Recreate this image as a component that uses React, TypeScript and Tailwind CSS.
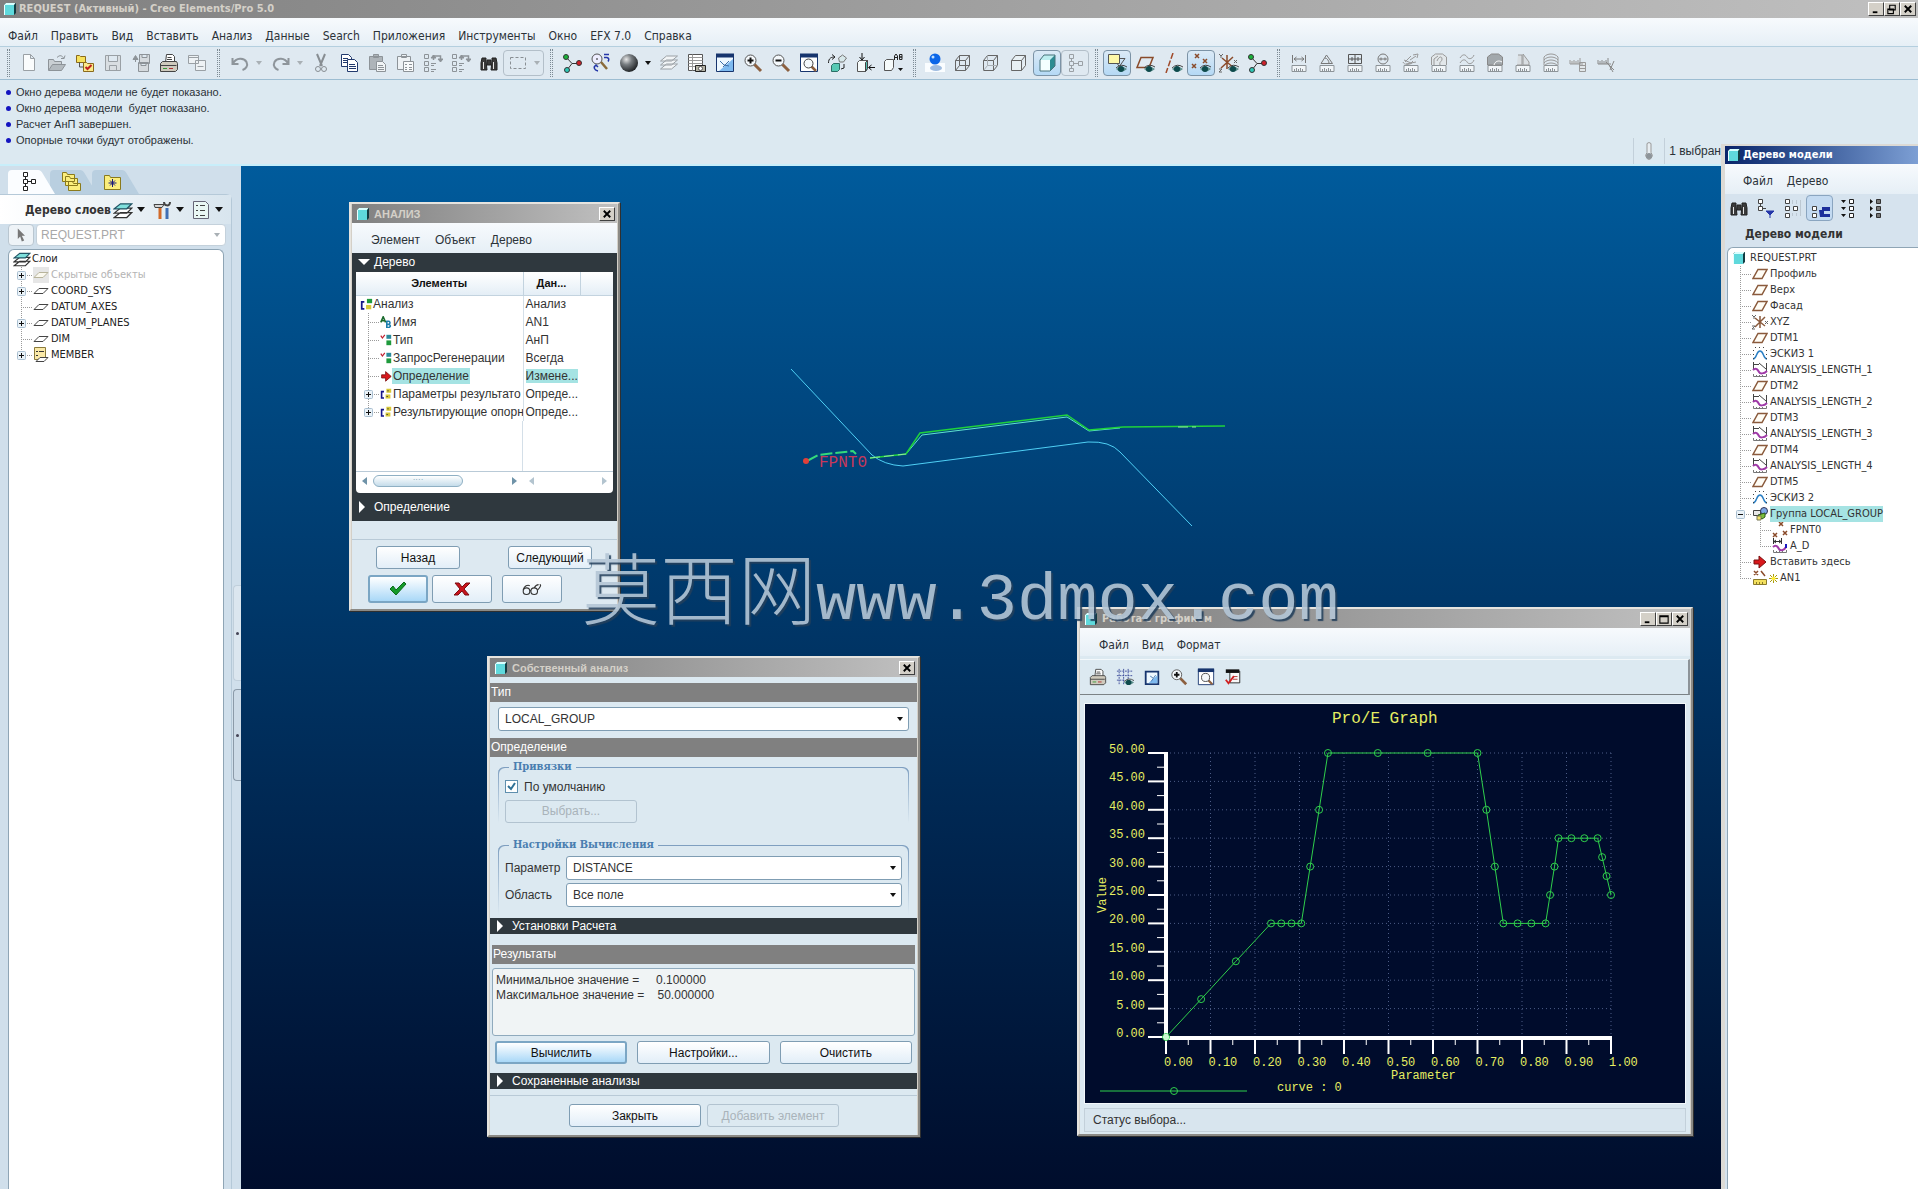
import { useState } from 'react'
import type { ReactNode } from 'react'
import clsx from 'clsx'

// ---------- icons ----------

type IconProps = { children: ReactNode; size?: number; box?: number }

function Ico({ children, size = 20, box = 20 }: IconProps) {
  return (
    <svg width={size} height={size} viewBox={`0 0 ${box} ${box}`} fill="none" stroke="#444" strokeWidth="1" className="shrink-0" aria-hidden="true">
      {children}
    </svg>
  )
}

const Eye = () => (
  <g stroke="none">
    <path d="M9 16 Q14 11 20 16 Q14 21 9 16Z" fill="#5c8f8c" />
    <circle cx="14" cy="16" r="3" fill="#0e4a4c" />
    <path d="M9 15 Q14 10 20 14" stroke="#444" fill="none" />
  </g>
)

const Ruler = () => (
  <path d="M3 12.500h14v6h-14z M5.500 16v2.500 M7.500 15v3.500 M9.500 16v2.500 M11.500 15v3.500 M13.500 16v2.500" stroke="#8d9499" fill="#f1f5f8" />
)

const Cube = ({ size = 14 }: { size?: number }) => (
  <svg width={size} height={size} viewBox="0 0 14 14" className="shrink-0" aria-hidden="true">
    <path d="M1 3 L3 1 H13 V11 L11 13 H1Z" fill="#123c42" />
    <path d="M1 3 L3 1 H12.500 L11 3Z" fill="#d8ffff" />
    <rect x="1" y="3" width="10" height="10" fill="#5fd9dc" />
    <path d="M1.500 3V13" stroke="#e8ffff" />
  </svg>
)

const WIRE = 'M2.500 7.500h10v10h-10z M2.500 7.500l4-5h10l-4 5 M16.500 2.500v10l-4 5'
const BINOCULARS = (
  <g stroke="#222" fill="#3a3a3a">
    <path d="M3 5h4v3l1 9h-6v-7z M13 5h4l1 5v7h-6l1-9z" />
    <path d="M8 7h4v5h-4z" />
    <path d="M4.500 9v7 M14.500 9v7" stroke="#e5e5e5" />
  </g>
)

const ICONS: Record<string, ReactNode> = {
  newFile: <path d="M4.500 1.500h7l4 4v12h-11z M11.500 1.500v4h4" stroke="#9aa0a5" fill="#fafcfd" />,
  open: (
    <g stroke="#8d9398" fill="#c9cfd3">
      <path d="M1.500 17V6.500h5l1 2h7v3" />
      <path d="M1.500 17.500l4-6h13l-4 6z" fill="#b3babf" />
      <path d="M10 4.500c3-3 5-2 7 1l1-3 M17 5.500h-3" fill="none" />
    </g>
  ),
  folders: (
    <g stroke="#8a6a1c" fill="#f7e15c">
      <path d="M1.500 2.500h3l1 1h5v6h-9z" />
      <path d="M4.500 9v5h4" fill="none" stroke="#555" />
      <path d="M8.500 9.500h3l1 1h6v8h-10z" fill="#fbe98a" />
      <path d="M10.500 14l2 2 4-4" stroke="#c02020" strokeWidth="2" fill="none" />
    </g>
  ),
  save: <path d="M2.500 2.500h15v15h-15z M5.500 2.500v6h9v-6 M6.500 17.500v-5h7v5" stroke="#9aa0a5" fill="#d9dee2" />,
  saveCopy: (
    <g stroke="#8d9398" fill="#d5dade">
      <path d="M8.500 1.500h10v9h-10z M7.500 9.500h10v9h-10z M10 9.500v3h5v-3 M11 1.500v3h5v-3" />
      <path d="M4.500 9V4.500 M2 6.500l2.500-4 2.500 4z" fill="#8d9398" />
    </g>
  ),
  printer: (
    <g stroke="#444">
      <path d="M6.500 9.500l1-8h6l2 2v6" fill="#fff" />
      <path d="M8.500 4.500h4 M8 6.500h5" />
      <path d="M1.500 10.500l2-2h14l1 2v6l-2 2h-15z" fill="#cfcabd" />
      <path d="M1.500 12.500h16" />
      <path d="M4 15.500h4" stroke="#3a9a3a" />
      <path d="M10 15.500h4" stroke="#b03030" />
    </g>
  ),
  windows: <path d="M1.500 2.500h10v8h-10z M1.500 4.500h10 M8.500 7.500h10v10h-10z M10.500 13.500h6" stroke="#9aa0a5" fill="#eef2f5" />,
  undo: <path d="M2.500 5v6h6 M3 10.500c3-6 11-6 13.500-1.500 2 4-1 7-4 8" stroke="#8e959b" strokeWidth="2" />,
  redo: <path d="M17.500 5v6h-6 M17 10.500c-3-6-11-6-13.500-1.500-2 4 1 7 4 8" stroke="#8e959b" strokeWidth="2" />,
  cut: (
    <g stroke="#888e93" fill="none">
      <path d="M6 1l5 12 M14 1l-5 12" strokeWidth="2" />
      <circle cx="7" cy="16" r="2.500" />
      <circle cx="13" cy="16" r="2.500" />
    </g>
  ),
  copy: (
    <g stroke="#223a6e" fill="#fff">
      <path d="M2.500 1.500h7l3 3v9h-10z" />
      <path d="M4 5.500h5 M4 7.500h6 M4 9.500h6" />
      <path d="M8.500 6.500h7l3 3v9h-10z" />
      <path d="M10 11.500h6 M10 13.500h7 M10 15.500h7" />
    </g>
  ),
  paste: (
    <g stroke="#8d9398" fill="#aeb4b9">
      <path d="M2.500 3.500h13v13h-13z M6.500 1.500h5v3h-5z" />
      <path d="M9.500 8.500h6l3 3v7h-9z" fill="#f1f4f6" />
      <path d="M11 12.500h5 M11 14.500h6 M11 16.500h6" />
    </g>
  ),
  pasteSpecial: (
    <g stroke="#8d9398" fill="#eef2f5">
      <path d="M2.500 3.500h13v13h-13z M6.500 1.500h5v3h-5z" />
      <path d="M8.500 8.500h10v10h-10z" fill="#f8fafb" />
      <path d="M10 11.500h2 M14 11.500h3 M10 14.500h2 M14 14.500h3 M10 16.500h2 M14 16.500h3" />
    </g>
  ),
  regen: (
    <g stroke="#8d9398" fill="none">
      <path d="M1.500 1.500h4v4h-4z M1.500 8.500h4v4h-4z M1.500 14.500h4v4h-4z M8 10.500h5 M8 16.500h5 M8 12.500h3 M8 18.500h3" />
      <path d="M10.500 7v-4h7v5" strokeWidth="1.500" />
      <path d="M8 5l2.500-3 2.500 3z M15 6h5l-2.500 3z" fill="#8d9398" />
    </g>
  ),
  find: BINOCULARS,
  selectBox: <path d="M2.500 4.500h15v11h-15z" stroke="#888e93" strokeDasharray="3 2" />,
  csys: (
    <g stroke="#333">
      <path d="M10 10.500h7 M10 10.500L4 4 M10 10.500L5 17" />
      <circle cx="4" cy="4" r="2.500" fill="#19b23a" />
      <circle cx="17" cy="10" r="2.500" fill="#d0202a" />
      <circle cx="5" cy="17" r="2.500" fill="#2fc7b5" />
    </g>
  ),
  spin: (
    <g>
      <circle cx="7" cy="6" r="5" stroke="#555" fill="#eef" />
      <path d="M6.500 6h1" stroke="#222" strokeWidth="2" />
      <path d="M11 9l6 7" stroke="#8a6a3a" strokeWidth="2.500" />
      <path d="M14 1.500h5 M14 4.500h3q3 1 1 4 M6 12c-3 2-2 5 2 6 M4 14l2-2 2 2" stroke="#2436a8" strokeWidth="1.500" />
    </g>
  ),
  sphere: (
    <>
      <defs>
        <radialGradient id="ball" cx="35%" cy="30%" r="75%">
          <stop offset="0" stopColor="#e8e8e8" />
          <stop offset="0.4" stopColor="#777c80" />
          <stop offset="1" stopColor="#1a1d20" />
        </radialGradient>
      </defs>
      <circle cx="10" cy="10" r="9" fill="url(#ball)" stroke="none" />
    </>
  ),
  layersGray: <path d="M1.500 16l6-5h11l-6 5z M1.500 12l6-5h11l-6 5z M1.500 8l6-5h11l-6 5z" stroke="#9aa0a5" fill="#f2f5f7" />,
  viewMgr: (
    <g stroke="#555" fill="#fff">
      <path d="M1.500 1.500h14v16h-14z" />
      <path d="M1.500 4.500h14 M1.500 7.500h14 M1.500 10.500h14 M1.500 13.500h14 M5.500 1.500v16" stroke="#999" />
      <path d="M8.500 12.500h10v6h-10z" fill="#b5b3a5" stroke="#222" />
      <circle cx="13.500" cy="15.500" r="2" />
    </g>
  ),
  repaint: (
    <g>
      <path d="M1.500 1.500h17v17h-17z" fill="#eef8ff" stroke="#17356e" />
      <path d="M1 2.500h18" stroke="#17356e" strokeWidth="4" />
      <path d="M4 18L18 6v12z" fill="#7db9ef" stroke="none" />
      <path d="M5 8l4 4 5 1 M8 14l6-6" stroke="#3c6ea8" />
    </g>
  ),
  zoomIn: (
    <g>
      <path d="M11 11l7 7" stroke="#8c6040" strokeWidth="3" />
      <circle cx="7.500" cy="7.500" r="5.500" fill="#f4f8fb" stroke="#555" />
      <path d="M4.500 7.500h6 M7.500 4.500v6" stroke="#111" strokeWidth="2" />
    </g>
  ),
  zoomOut: (
    <g>
      <path d="M11 11l7 7" stroke="#8c6040" strokeWidth="3" />
      <circle cx="7.500" cy="7.500" r="5.500" fill="#f4f8fb" stroke="#555" />
      <path d="M4.500 7.500h6" stroke="#111" strokeWidth="2" />
    </g>
  ),
  refit: (
    <g>
      <path d="M1.500 1.500h17v17h-17z" fill="#fff" stroke="#17356e" />
      <path d="M1 2.500h18" stroke="#17356e" strokeWidth="4" />
      <path d="M12 13l5 5" stroke="#8c6040" strokeWidth="2.500" />
      <circle cx="9.500" cy="10.500" r="4.500" fill="#f4f8fb" stroke="#444" />
    </g>
  ),
  reorient: (
    <g>
      <path d="M1.500 10c0-5 3-6 6-6 M5 1.500l3 2.500-3 2.500 M17 11v4l-3 1" stroke="#222" />
      <path d="M11.500 5l4-3 4 3-3 4h-4z" fill="#d7e8ea" stroke="#777" />
      <path d="M4.500 12.500l2-2h6v6l-2 2h-6z" fill="#58c9b4" stroke="#2d6e66" />
    </g>
  ),
  orient: (
    <g>
      <path d="M2.500 9.500l2-2h8v8l-2 3h-8z" fill="#f6fbfb" stroke="#555" />
      <path d="M10.500 9.500l2-2v8l-2 3z" fill="#53bfae" />
      <path d="M7 0v6 M4.500 4l2.500 3 2.500-3 M20 14.500h-6 M16.500 12l-3 2.500 3 2.500" stroke="#111" />
    </g>
  ),
  savedViews: (
    <g>
      <path d="M1.500 8.500l2-2h7v8l-2 3h-7z" fill="#f6fbfb" stroke="#555" />
      <path d="M11.500 7v-4l1.500-2 1.500 2v4 M11.500 4.500h3 M16.500 1.500h2.500v2.500h-2.500z M16.500 4h2.500v2.500h-2.500z" stroke="#222" />
      <path d="M15 15h5l-2.500 3z" fill="#111" stroke="none" />
    </g>
  ),
  shadeBall: (
    <g stroke="none">
      <path d="M0 10h20v9h-20z" fill="#fafdff" />
      <ellipse cx="11" cy="15" rx="6" ry="3" fill="#9fbce0" />
      <circle cx="10" cy="6" r="5.500" fill="#0b66e8" />
      <circle cx="8" cy="4" r="1.500" fill="#bfe0ff" />
    </g>
  ),
  wire: <path d={WIRE + ' M6.500 2.500v10h10 M6.500 12.500l-4 5'} stroke="#666" />,
  hidden: (
    <>
      <path d={WIRE} stroke="#666" />
      <path d="M6.500 2.500v10h10 M6.500 12.500l-4 5" stroke="#aab0b5" />
    </>
  ),
  noHidden: <path d={WIRE} stroke="#666" fill="#e8f0f4" />,
  shaded: (
    <g stroke="none">
      <path d="M3 7h10v11h-10z" fill="#f4ffff" />
      <path d="M3 7l4-5h11l-5 5z" fill="#bdeef0" />
      <path d="M18 2v11l-5 5v-11z" fill="#2c8c92" />
      <path d="M3 7l4-5h11v11l-5 5h-10z" stroke="#49737a" fill="none" />
    </g>
  ),
  modelTree: <path d="M4.500 1.500h4v4h-4z M4.500 8.500h4v4h-4z M4.500 15.500h4v3h-4z M13.500 8.500h4v4h-4z M6.500 5.500v3 M6.500 12.500v3 M8.500 10.500h5" stroke="#9aa0a5" />,
  notes: (
    <g>
      <path d="M1.500 1.500h11v9h-11z" fill="#fdf8a8" stroke="#555" />
      <path d="M13 5.500h5l-5 7 M10 10l3 5" stroke="#555" />
      <Eye />
    </g>
  ),
  planes: (
    <g>
      <path d="M6 4.500h12l-4 10h-12z" stroke="#8a4b2a" strokeWidth="1.500" />
      <Eye />
    </g>
  ),
  axes: (
    <g>
      <path d="M10 0L3 20" stroke="#a04a2a" strokeWidth="1.500" strokeDasharray="6 2" />
      <Eye />
    </g>
  ),
  points: (
    <g>
      <path d="M4 1l4 4m0-4l-4 4 M12 6l4 4m0-4l-4 4 M1 11l4 4m0-4l-4 4" stroke="#8a4b2a" strokeWidth="1.500" />
      <Eye />
    </g>
  ),
  csysShow: (
    <g>
      <path d="M8 2v14 M2 15L14 4 M3 5l12 10" stroke="#8a4b2a" strokeWidth="1.500" />
      <path d="M0 1l2 2 2-2M2 3v2 M15 7l3 3m0-3l-3 3 M0 16h3l-3 3h3" stroke="#666" />
      <Eye />
    </g>
  ),
  mDist: <g><Ruler /><path d="M3.500 2v8 M16.500 2v8 M5 6h10 M7.500 4l-2.500 2 2.500 2 M12.500 4l2.500 2-2.500 2" stroke="#777" /></g>,
  mAngle: <g><Ruler /><path d="M4 10.500L9.500 2l6 8.500z M8 5c2 0 4 3 4 5" stroke="#777" /></g>,
  mArea: <g><Ruler /><path d="M3.500 1.500h13v9h-13z M10 2v9 M4 6h12 M7 4v4 M13 4v4" stroke="#555" /></g>,
  mDiam: <g><Ruler /><circle cx="10" cy="6" r="5" stroke="#777" /><path d="M6 6h8 M8 4.500v3 M12 4.500v3" stroke="#777" /></g>,
  mXform: <g><Ruler /><path d="M4 9l6-6 M3 7l7 3 2-2 M9 7l6-4 M12 2l5-1-1 4 M5 11l10-2 M2 9c1 3 6 3 9 1" stroke="#999" /></g>,
  mCurv: <g><Ruler /><path d="M2.500 12V4l4-3h7l4 3v8 M5 12V6l4-3 M8 8c2-5 5-5 5-2s-3 2-2 6" stroke="#999" fill="#e2e7ea" /></g>,
  mWave: <g><Ruler /><path d="M3 5c3-5 6-3 7-1s5 3 7-2 M3 10c3-5 6-3 7-1s5 3 7-2" stroke="#999" /></g>,
  mShade: <g><Ruler /><path d="M2.500 12V4l4-3h7l4 3v8z" stroke="#888" fill="#a2a8ac" /><path d="M9 12c1-4 5-5 8-3" stroke="#fff" /></g>,
  mDraft: <g><Ruler /><path d="M5 2h4v10h-5 M10 1l6 8v3 M10 1v11h6" stroke="#999" fill="#d9dee2" /></g>,
  mSect: <g><Ruler /><path d="M3 4c3-4 11-4 14 0 M3 7c3-4 11-4 14 0 M3 10c3-4 11-4 14 0 M3 13c3-4 11-4 14 0 M3 4v8 M17 4v8" stroke="#999" /></g>,
  mEnd1: <path d="M1 7v4h13 M3 8v3 M5 7v4 M7 8v3 M9 7v4 M11 5v6 M10.500 9.500h6v9h-6z M10.500 12.500h6 M10.500 15.500h6" stroke="#999" fill="#e2e7ea" />,
  mEnd2: <path d="M1 7v4h13 M3 8v3 M5 7v4 M7 8v3 M9 7v4 M11 5v6 M9 9l8 8 M17 8l-4 9 M12 12l4 7" stroke="#888" />,
  // graph tool window
  gridEye: (
    <g>
      <path d="M3.500 1v18 M8.500 1v18 M13.500 1v12 M1 3.500h18 M1 8.500h18 M1 13.500h9" stroke="#3a4a9a" strokeDasharray="2 1" />
      <Eye />
    </g>
  ),
  refresh: (
    <g>
      <path d="M3 4h14v14h-14z" fill="#eef8ff" stroke="#17356e" strokeWidth="2" />
      <path d="M6 17L16 8v9z" fill="#7db9ef" stroke="none" />
      <path d="M9 15l5-7 M8 9l3 2" stroke="#3c6ea8" />
    </g>
  ),
  report: (
    <g>
      <path d="M6.500 3.500h11v13h-11z" fill="#f8f8f8" stroke="#222" />
      <path d="M2 3.500h15" stroke="#111" strokeWidth="4" />
      <path d="M10 9.500h5 M10 12.500h5" stroke="#a33" />
      <path d="M2 13l3 4 6-8" stroke="#d02020" strokeWidth="2" />
    </g>
  ),
}

const ROW_ICONS: Record<string, ReactNode> = {
  plane: <path d="M6 3.500h9l-5 9h-9z" stroke="#8a5a3c" strokeWidth="1.500" fill="#fffdf6" />,
  csys: (
    <g>
      <path d="M8 2v12 M3 13L13 3 M3 4l10 8" stroke="#8a5a3c" strokeWidth="1.500" />
      <path d="M0 1l2 2 2-2 M2 3v2 M13 7l3 3m0-3l-3 3 M0 12h3l-3 3h3" stroke="#666" />
    </g>
  ),
  sketch: (
    <g>
      <path d="M1 13c4 0 3-8 7-8s3 8 7 8" stroke="#2a7fc4" strokeWidth="1.500" />
      <path d="M3 1.500h11 M1.500 4v9 M14.500 4v9" stroke="#444" strokeDasharray="1 3" />
    </g>
  ),
  analysis: (
    <g>
      <path d="M1.500 0v7 M1 2.500h6 M7 1l7 6 M14.500 1v8" stroke="#444" />
      <path d="M1 8c3-3 5 0 6 2s5 2 8-1" stroke="#a03aa8" strokeWidth="2" />
      <path d="M1.500 12v2.500h13v-2.500 M4.500 13v1 M7.500 13v1 M10.500 13v1" stroke="#777" />
    </g>
  ),
  group: (
    <g>
      <path d="M1.500 4.500h7v5h-7z" fill="#e8e8e8" stroke="#444" />
      <circle cx="12" cy="5" r="3.500" fill="#7da7e6" stroke="#335" />
      <path d="M6 9l4 4 3-2v-4z" fill="#7bbf3a" stroke="#2d5a1a" />
      <path d="M5 10h4v4h-4z" fill="#f4e36a" stroke="#775" />
    </g>
  ),
  point: <path d="M7 0l4 4m0-4l-4 4 M1 11l4 4m0-4l-4 4 M11 9l4 4m0-4l-4 4" stroke="#8a4b2a" strokeWidth="1.500" />,
  ad: (
    <g>
      <path d="M1.500 0v6 M9.500 0v6 M2 3.500h7 M4 2l-2 1.500 2 1.500 M7 2l2 1.500-2 1.500" stroke="#333" />
      <path d="M1 9c3-3 5 0 6 2s5 2 7-2" stroke="#a03aa8" strokeWidth="2" />
      <path d="M14 6v4" stroke="#1a1ac0" strokeWidth="2" />
      <path d="M1.500 12v2.500h13v-2.500 M4.500 13v1 M7.500 13v1 M10.500 13v1" stroke="#777" />
    </g>
  ),
  arrow: <path d="M2 6h5v-4l7 6-7 6v-4h-5z" fill="#d8181c" stroke="#7a1010" />,
  an: (
    <g>
      <path d="M2 1l4 4m0-4l-4 4 M9 1l4 5" stroke="#8a4b2a" strokeWidth="1.500" />
      <path d="M1.500 9.500h13v5h-13z M4.500 12v2 M7.500 12v2 M10.500 12v2" fill="#f3e05e" stroke="#8a7a2a" />
    </g>
  ),
  layer: <path d="M6 5.500h9l-5 5h-9z" stroke="#444" fill="#fff" />,
  layerOff: (
    <g>
      <path d="M0 0h16v16h-16z" fill="#e6e6e6" stroke="none" />
      <path d="M6 5.500h9l-5 5h-9z" stroke="#b8b49c" fill="#faf8ee" />
    </g>
  ),
  member: (
    <g>
      <path d="M1.500 0.500h11v12h-11z" fill="#fae9a8" stroke="#8a7a3a" />
      <path d="M3 4.500h2 M6 4.500h5 M3 8.500h2" stroke="#333" />
      <path d="M7 10.500h8l-4 4h-8z" fill="#fff" stroke="#444" />
    </g>
  ),
  layers: (
    <g>
      <path d="M1 14l5-4h9l-4 4z M1 10.500l5-4h9l-4 4z" fill="#fff" stroke="#333" />
      <path d="M1 7l5-4h9l-4 4z" fill="#7fe0dc" stroke="#256" />
    </g>
  ),
  elems: (
    <g stroke="none">
      <path d="M5 4.500h-3v8h3" stroke="#15158a" strokeWidth="2" fill="none" />
      <path d="M8 1h6v5h-6z" fill="#1f9a3c" />
      <path d="M7 8h6v5h-6z" fill="#d8c838" />
    </g>
  ),
  elemsY: (
    <g stroke="none">
      <path d="M5 4.500h-3v8h3" stroke="#15158a" strokeWidth="2" fill="none" />
      <path d="M8 1h6v5h-6z M7 8h6v5h-6z" fill="#d8c838" />
      <path d="M9 3h2v1h-2z M8 10h2v1h-2z" fill="#333" />
    </g>
  ),
  name: (
    <g strokeWidth="2">
      <path d="M1 8l3-7 3 7 M2 6h4" stroke="#1b6b2e" />
      <path d="M8.500 6v9 M8 6.500h3q3 2 0 4h-3 M11 10.500q4 2 0 4h-3" stroke="#1d7fae" />
    </g>
  ),
  check: (
    <g>
      <path d="M1 2l2 3 3-4" stroke="#c02030" strokeWidth="1.500" />
      <path d="M8 1h6v5h-6z" fill="#2a8a9c" stroke="none" />
      <path d="M8 8h6v6h-6z" fill="#1f9a3c" stroke="none" />
    </g>
  ),
}

// ---------- shared bits ----------

const Caret = ({ light }: { light?: boolean }) => (
  <svg width="8" height="5" viewBox="0 0 8 5" className="shrink-0" aria-hidden="true">
    <path d="M0 0h8l-4 5z" fill={light ? '#a9b0b5' : '#111'} />
  </svg>
)

const SmallCaret = ({ light }: { light?: boolean }) => (
  <svg width="6" height="4" viewBox="0 0 6 4" className="shrink-0" aria-hidden="true">
    <path d="M0 0h6l-3 4z" fill={light ? '#a9b0b5' : '#111'} />
  </svg>
)

type BranchProps = { last?: boolean; sign?: '+' | '-'; tick?: boolean; h?: number }

// tree connector: dotted trunk, dotted arm, optional expander box
function Branch({ last, sign, tick = true, h = 16 }: BranchProps) {
  const mid = h / 2
  return (
    <svg width="20" height={h} viewBox={`0 0 20 ${h}`} className="shrink-0" aria-hidden="true">
      <g stroke="#9a9a9a" strokeDasharray="1 1">
        <path d={`M8.500 0V${last ? mid : h}`} />
        {tick && <path d={`M8 ${mid}.5H19`} />}
      </g>
      {sign && (
        <g fill="none">
          <rect x="4.500" y={mid - 3.5} width="8" height="8" rx="1" fill="#eaf2f8" stroke="#a9bfd0" />
          <path d={`M6 ${mid + 0.5}h5`} stroke="#111" />
          {sign === '+' && <path d={`M8.500 ${mid - 2}v5`} stroke="#111" />}
        </g>
      )}
    </svg>
  )
}

function CaptionButton({ kind }: { kind: 'min' | 'max' | 'restore' | 'close' }) {
  const paths = {
    min: 'M4 10h5',
    max: 'M3 3h9v8h-9z M3 4h9',
    restore: 'M5 2.500h6v5h-6z M3 6.500h6v5h-6z M3 7h6',
    close: 'M4 3l7 7 M11 3l-7 7',
  }
  return (
    <button type="button" aria-label={kind} className="flex h-3.5 w-4 items-center justify-center border border-white border-r-[#404040] border-b-[#404040] bg-[#d4d0c8]">
      <svg width="14" height="12" viewBox="0 0 15 13" aria-hidden="true">
        <path d={paths[kind]} stroke="#000" strokeWidth={kind === 'restore' || kind === 'max' ? 1.2 : 2} fill="none" />
      </svg>
    </button>
  )
}

type WinProps = { title: string; className: string; buttons?: ('min' | 'max' | 'close')[]; children: ReactNode }

function Win({ title, className, buttons = ['close'], children }: WinProps) {
  return (
    <section className={clsx('absolute flex flex-col border-2 border-[#e6e4df] border-r-[#8b8a86] border-b-[#8b8a86] bg-[#d4d0c8] shadow-[1px_1px_0_#303030]', className)}>
      <div className="mx-px flex h-[19px] items-center gap-1 bg-linear-to-r from-[#808080] to-[#c0c0c0] pr-0.5 pl-1 text-[11px] font-bold text-[#d4d0c8]">
        <Cube />
        <h2 className="flex-1 pt-px">{title}</h2>
        <div className="flex">{buttons.map((b) => <CaptionButton key={b} kind={b} />)}</div>
      </div>
      {children}
    </section>
  )
}

function Menu({ items, className }: { items: string[]; className: string }) {
  return (
    <nav className={clsx('flex items-center bg-linear-to-b from-[#f7fafd] to-[#e6eff6] text-xs text-[#2b3238]', className)}>
      {items.map((m) => <button type="button" key={m}>{m}</button>)}
    </nav>
  )
}

type BtnProps = { children: ReactNode; className?: string; primary?: boolean; disabled?: boolean; label?: string }

function Btn({ children, className, primary, disabled, label }: BtnProps) {
  return (
    <button
      type="button"
      disabled={disabled}
      aria-label={label}
      className={clsx(
        'flex items-center justify-center rounded-[3px] border text-xs',
        disabled ? 'border-[#b2c3d0] text-[#a9b3ba]' : 'text-[#111]',
        primary && 'border-2 border-[#7ba6c4] bg-linear-to-b from-white to-[#a9d8f7]',
        !primary && !disabled && 'border-[#7f9db3] bg-linear-to-b from-white to-[#e2eef8]',
        className,
      )}
    >
      {children}
    </button>
  )
}

function Combo({ id, value, className }: { id: string; value: string; className?: string }) {
  return (
    <div className={clsx('relative flex h-6 items-center', className)}>
      <select id={id} aria-label={id} className="h-full w-full appearance-none rounded-[3px] border border-[#7f9db3] bg-white pl-1.5 text-xs text-[#333]">
        <option>{value}</option>
      </select>
      <span className="pointer-events-none absolute right-1.5"><SmallCaret /></span>
    </div>
  )
}

const Bar = ({ children }: { children: ReactNode }) => <h3 className="h-[19px] bg-[#808080] pl-px text-xs leading-[19px] text-white">{children}</h3>

function Fold({ children, open, className }: { children: ReactNode; open?: boolean; className?: string }) {
  return (
    <button type="button" className={clsx('flex w-full items-center gap-1 bg-[#2f383e] pl-1.5 text-left text-xs text-white', className)}>
      <svg width="12" height="12" viewBox="0 0 12 12" aria-hidden="true">
        <path d={open ? 'M0 3h12l-6 6z' : 'M1 0v12l6-6z'} fill="#fff" />
      </svg>
      {children}
    </button>
  )
}

// ---------- main toolbar ----------

type Tool = { icon: string; on?: boolean; frame?: boolean; drop?: 'light' | 'dark' }

const TOOLS: Tool[][] = [
  [{ icon: 'newFile' }, { icon: 'open' }, { icon: 'folders' }, { icon: 'save' }, { icon: 'saveCopy' }, { icon: 'printer' }, { icon: 'windows' }],
  [
    { icon: 'undo', drop: 'light' }, { icon: 'redo', drop: 'light' }, { icon: 'cut' }, { icon: 'copy' }, { icon: 'paste' },
    { icon: 'pasteSpecial' }, { icon: 'regen' }, { icon: 'regen' }, { icon: 'find' }, { icon: 'selectBox', drop: 'light', frame: true },
  ],
  [
    { icon: 'csys' }, { icon: 'spin' }, { icon: 'sphere', drop: 'dark' }, { icon: 'layersGray' }, { icon: 'viewMgr' }, { icon: 'repaint' },
    { icon: 'zoomIn' }, { icon: 'zoomOut' }, { icon: 'refit' }, { icon: 'reorient' }, { icon: 'orient' }, { icon: 'savedViews' },
  ],
  [{ icon: 'shadeBall' }, { icon: 'wire' }, { icon: 'hidden' }, { icon: 'noHidden' }, { icon: 'shaded', on: true }, { icon: 'modelTree', frame: true }],
  [{ icon: 'notes', on: true }, { icon: 'planes' }, { icon: 'axes' }, { icon: 'points', on: true }, { icon: 'csysShow' }, { icon: 'csys' }],
  [
    { icon: 'mDist' }, { icon: 'mAngle' }, { icon: 'mArea' }, { icon: 'mDiam' }, { icon: 'mXform' }, { icon: 'mCurv' },
    { icon: 'mWave' }, { icon: 'mShade' }, { icon: 'mDraft' }, { icon: 'mSect' }, { icon: 'mEnd1' }, { icon: 'mEnd2' },
  ],
]

function Toolbar() {
  return (
    <div className="flex h-[34px] items-center overflow-hidden border-y border-[#b4cfdf] border-b-[#9dbdd2] bg-[#dfe9f1] pl-px">
      {TOOLS.map((group, g) => (
        <div key={g} className="flex items-center">
          <span className="flex w-3.5 justify-center">
            <span className="h-7 w-[3px] border-x border-dotted border-[#7d8b95]" />
          </span>
          {group.map((t, i) => (
            <button
              key={i}
              type="button"
              aria-label={t.icon}
              className={clsx(
                'flex h-[26px] items-center justify-center rounded-sm border',
                t.drop ? 'w-[41px] gap-1.5' : 'w-7',
                t.on && 'border-[#7c93a6] bg-linear-to-b from-[#dbeaf6] to-[#b5d9f5]',
                t.frame && 'border-[#b3bfc9]',
                !t.on && !t.frame && 'border-transparent',
              )}
            >
              <Ico>{ICONS[t.icon]}</Ico>
              {t.drop && <SmallCaret light={t.drop === 'light'} />}
            </button>
          ))}
        </div>
      ))}
    </div>
  )
}

// ---------- left panel ----------

const LAYERS: { label: string; icon: string; plus?: boolean; off?: boolean }[] = [
  { label: 'Скрытые объекты', icon: 'layerOff', plus: true, off: true },
  { label: 'COORD_SYS', icon: 'layer', plus: true },
  { label: 'DATUM_AXES', icon: 'layer' },
  { label: 'DATUM_PLANES', icon: 'layer', plus: true },
  { label: 'DIM', icon: 'layer' },
  { label: 'MEMBER', icon: 'member', plus: true },
]

function TabShape({ active, children }: { active?: boolean; children: ReactNode }) {
  return (
    <svg width="50" height="25" viewBox="0 0 50 25" className={clsx('-mr-2', active && 'z-10')} aria-hidden="true">
      <path d="M0 25V5q0-4 4-4H30q3 0 5 4l12 20z" fill={active ? '#fbfdff' : '#b9cfe0'} />
      {children}
    </svg>
  )
}

function LayerPanel() {
  return (
    <aside className="flex w-[241px] shrink-0 bg-[#d0dfeb]">
      <div className="flex min-w-0 flex-1 flex-col pt-[3px]">
        <div role="tablist" className="flex pl-2">
          <button type="button" role="tab" aria-label="layers" className="flex">
            <TabShape active>
              <path d="M15.500 3.500h4v4h-4z M15.500 10.500h4v4h-4z M15.500 17.500h4v4h-4z M23.500 10.500h4v4h-4z M17.500 7v3 M17.500 14v3 M19 12.500h4" stroke="#222" fill="#fff" />
            </TabShape>
          </button>
          <button type="button" role="tab" aria-label="folders" className="flex">
            <TabShape>
              <path d="M12.500 3.500h4l1 2h7v7h-12z M15.500 7.500h4l1 2h7v7h-12z M18.500 12.500h4l1 2h7v7h-12z" stroke="#8a7a1c" fill="#fbee7c" />
            </TabShape>
          </button>
          <button type="button" role="tab" aria-label="favorites" className="flex">
            <TabShape>
              <path d="M12.500 6.500h5l1 2h10v12h-16z" stroke="#8a7a1c" fill="#fbee7c" />
              <path d="M20.500 10v8 M16.500 14h8 M18 11.500l5 5 M23 11.500l-5 5" stroke="#18187a" />
            </TabShape>
          </button>
        </div>
        <div className="mr-px flex min-h-0 flex-1 flex-col rounded-tr-md border-t border-r border-[#b5c9d8]">
          <div className="flex h-[29px] items-center bg-linear-to-r from-white to-[#d8e5ee] pl-[25px] text-xs font-bold text-[#333]">
            <span className="w-[88px]">Дерево слоев</span>
            {['layers', 'tools', 'list'].map((k) => (
              <button type="button" key={k} aria-label={k} className="flex w-[39px] items-center gap-1">
                {k === 'layers' && <Ico box={16}>{ROW_ICONS.layers}</Ico>}
                {k === 'tools' && (
                  <Ico>
                    <path d="M8 7v12" stroke="#d26a2a" strokeWidth="3" />
                    <path d="M2 4.500h10l-2 3h-7z" fill="#d7d7d7" />
                    <path d="M15 8v11" stroke="#3f6fb5" strokeWidth="3" />
                    <path d="M12 2c0 4 6 5 6 0" strokeWidth="2" />
                  </Ico>
                )}
                {k === 'list' && (
                  <Ico>
                    <path d="M2.500 1.500h12l3 3v14h-15z" fill="#e9f7f4" stroke="#667" />
                    <path d="M5 5.500h2 M9 5.500h5 M5 10.500h2 M9 10.500h5 M5 15.500h2 M9 15.500h5" />
                  </Ico>
                )}
                <Caret />
              </button>
            ))}
          </div>
          <div className="flex gap-0.5 pr-[5px] pl-2">
            <button type="button" aria-label="pick" className="flex h-[22px] w-[26px] items-center justify-center rounded-sm border border-[#b9c6d0] bg-[#eef3f7]">
              <Ico size={16}><path d="M6 2l9 9h-4l3 6-3 1-2-6-3 3z" fill="#777" stroke="none" /></Ico>
            </button>
            <div className="relative flex flex-1 items-center">
              <select aria-label="model" disabled className="h-[22px] w-full appearance-none rounded-sm border border-[#c4d1db] bg-white pl-1 font-['Liberation_Sans',sans-serif] text-xs text-[#a8a8a8] opacity-100">
                <option>REQUEST.PRT</option>
              </select>
              <span className="absolute right-1.5"><SmallCaret light /></span>
            </div>
          </div>
          <ul className="mt-[3px] mr-[7px] ml-2 flex-1 rounded-t-md border border-b-0 border-[#8fa5b5] bg-white pt-px pl-1 text-[11px] text-[#222]">
            <li className="flex h-4 items-center gap-px"><Ico size={18} box={16}>{ROW_ICONS.layers}</Ico>Слои</li>
            {LAYERS.map((l, i) => (
              <li key={l.label} className={clsx('flex h-4 items-center', l.off && 'text-[#b4b4b4]')}>
                <Branch sign={l.plus ? '+' : undefined} last={i === LAYERS.length - 1} />
                <Ico size={16} box={16}>{ROW_ICONS[l.icon]}</Ico>
                <span className="ml-0.5">{l.label}</span>
              </li>
            ))}
          </ul>
        </div>
      </div>
      <div className="flex w-2 flex-col gap-2 pt-[419px]">
        <button type="button" aria-label="collapse" className="flex h-24 items-center justify-center rounded-l border border-r-0 border-[#c0cfdb] bg-[#dbe6ef]"><span className="size-[3px] rounded-full bg-[#445]" /></button>
        <button type="button" aria-label="collapse tree" className="flex h-[92px] items-center justify-center rounded-l border border-r-0 border-[#8b9aa8] bg-[#cddbe7]"><span className="size-[3px] rounded-full bg-[#445]" /></button>
      </div>
    </aside>
  )
}

// ---------- model tree ----------

const MODEL: { label: string; icon: string; level?: number; last?: boolean; sel?: boolean; star?: boolean }[] = [
  { label: 'Профиль', icon: 'plane' },
  { label: 'Верх', icon: 'plane' },
  { label: 'Фасад', icon: 'plane' },
  { label: 'XYZ', icon: 'csys' },
  { label: 'DTM1', icon: 'plane' },
  { label: 'ЭСКИЗ 1', icon: 'sketch' },
  { label: 'ANALYSIS_LENGTH_1', icon: 'analysis' },
  { label: 'DTM2', icon: 'plane' },
  { label: 'ANALYSIS_LENGTH_2', icon: 'analysis' },
  { label: 'DTM3', icon: 'plane' },
  { label: 'ANALYSIS_LENGTH_3', icon: 'analysis' },
  { label: 'DTM4', icon: 'plane' },
  { label: 'ANALYSIS_LENGTH_4', icon: 'analysis' },
  { label: 'DTM5', icon: 'plane' },
  { label: 'ЭСКИЗ 2', icon: 'sketch' },
  { label: 'Группа LOCAL_GROUP', icon: 'group', sel: true },
  { label: 'FPNT0', icon: 'point', level: 2 },
  { label: 'A_D', icon: 'ad', level: 2, last: true },
  { label: 'Вставить здесь', icon: 'arrow' },
  { label: 'AN1', icon: 'an', last: true, star: true },
]

function ModelTree() {
  return (
    <aside className="absolute top-[144px] right-0 bottom-0 flex w-[197px] flex-col border-t-2 border-l-4 border-[#dcdad5] bg-[#d6e3ee]">
      <div className="flex h-[18px] items-center gap-0.5 bg-linear-to-r from-[#0a246a] to-[#7d9fd4] pl-0.5 text-[11px] font-bold text-white">
        <Cube />
        <h2 className="pt-px">Дерево модели</h2>
      </div>
      <Menu items={['Файл', 'Дерево']} className="h-[30px] gap-3.5 pt-1 pl-[18px]" />
      <div className="flex h-[27px] items-center">
        {[0, 1, 2, 3, 4, 5].map((n) => (
          <button
            key={n}
            type="button"
            aria-label={`tree tool ${n + 1}`}
            className={clsx('flex h-[26px] w-[27px] items-center justify-center rounded-sm border', n === 3 ? 'border-[#8aa5c0] bg-[#c3daf1]' : 'border-transparent')}
          >
            <Ico>
              {n === 0 && BINOCULARS}
              {n === 1 && <path d="M2.500 1.500h4v4h-4z M2.500 8.500h4v4h-4z M4.500 6v3 M7 10.500h3" stroke="#444" fill="#fff" />}
              {n === 1 && <path d="M10 13h8l-4 4z M14 16v4" fill="#2436a8" stroke="#2436a8" />}
              {n === 2 && <path d="M2.500 1.500h4v4h-4z M2.500 8.500h4v4h-4z M2.500 15.500h4v4h-4z M10.500 8.500h4v4h-4z" stroke="#444" fill="#fff" />}
              {n === 2 && <path d="M17.500 2v16 M9.500 2v4 M13.500 2v4 M9.500 15v3 M13.500 15v3" stroke="#bcc8d2" />}
              {n === 3 && <path d="M2.500 8.500h4v4h-4z M2.500 15.500h4v4h-4z" stroke="#444" fill="#fff" />}
              {n === 3 && <path d="M9 12h3v-3h8v4h-6v3h6v3h-10z" stroke="none" fill="#1c2f9c" />}
              {n === 4 && <path d="M12.500 1.500h4v4h-4z M12.500 8.500h4v4h-4z M12.500 15.500h4v4h-4z" stroke="#222" fill="#fff" />}
              {n === 4 && <path d="M4 2h5l-2.500 3z M4 9h5l-2.500 3z M4 16h5l-2.500 3z" stroke="none" fill="#111" />}
              {n === 5 && <path d="M12.500 1.500h4v4h-4z M12.500 8.500h4v4h-4z M12.500 15.500h4v4h-4z" stroke="#333" fill="#777" />}
              {n === 5 && <path d="M6 1v5l3-2.500z M6 8v5l3-2.500z M6 15v5l3-2.500z" stroke="none" fill="#111" />}
            </Ico>
          </button>
        ))}
      </div>
      <h3 className="h-[26px] pt-[3px] pl-5 text-xs leading-[20px] font-bold text-[#333]">Дерево модели</h3>
      <ul className="ml-[2px] flex-1 rounded-tl-md border-t border-l border-[#8fa5b5] bg-white pt-0.5 pl-1 text-[11px] whitespace-nowrap text-[#333]">
        <li className="flex h-4 items-center gap-1"><Cube />REQUEST.PRT</li>
        {MODEL.map((m) => (
          <li key={m.label} className="flex h-4 items-center">
            {m.level === 2 && <Branch tick={false} />}
            <Branch last={m.last} sign={m.sel ? '-' : undefined} />
            <Ico size={16} box={16}>{ROW_ICONS[m.icon]}</Ico>
            {m.star && (
              <svg width="9" height="9" viewBox="0 0 9 9" className="ml-px" aria-hidden="true">
                <path d="M4.500 0v9 M0 4.500h9 M1 1l7 7 M8 1l-7 7" stroke="#a89a10" />
                <circle cx="4.500" cy="4.500" r="2" fill="#ffee3a" />
              </svg>
            )}
            <span className={clsx('ml-0.5', m.star && 'ml-0', m.sel && 'bg-[#a5e3e3]')}>{m.label}</span>
          </li>
        ))}
      </ul>
    </aside>
  )
}

// ---------- analysis feature window ----------

const ELEMENTS: { icon: string; label: string; value: string; plus?: boolean; sel?: boolean }[] = [
  { icon: 'name', label: 'Имя', value: 'AN1' },
  { icon: 'check', label: 'Тип', value: 'АнП' },
  { icon: 'check', label: 'ЗапросРегенерации', value: 'Всегда' },
  { icon: 'arrow', label: 'Определение', value: 'Измене...', sel: true },
  { icon: 'elemsY', label: 'Параметры результато', value: 'Опреде...', plus: true },
  { icon: 'elemsY', label: 'Результирующие опорн', value: 'Опреде...', plus: true },
]

function AnalysisWindow() {
  return (
    <Win title="АНАЛИЗ" className="top-9 left-[108px] w-[271px] font-['Liberation_Sans',sans-serif]">
      <div className="mx-px bg-[#dde9f1]">
        <Menu items={['Элемент', 'Объект', 'Дерево']} className="h-[30px] gap-[15px] pt-1 pl-[19px]" />
        <div className="bg-[#2f383e]">
          <Fold open className="h-[17px]">Дерево</Fold>
          <div className="mx-1 mt-0.5 flex h-[221px] flex-col rounded bg-white">
            <table className="w-full table-fixed text-xs text-[#333]">
              <colgroup>
                <col className="w-[167px]" />
                <col className="w-[57px]" />
                <col />
              </colgroup>
              <thead>
                <tr className="h-[23px] bg-linear-to-b from-white to-[#e4eef6] text-[11px] text-[#111]">
                  <th className="border-r border-b border-[#c3d3df]">Элементы</th>
                  <th className="border-r border-b border-[#c3d3df]">Дан...</th>
                  <th className="border-b border-[#c3d3df]" />
                </tr>
              </thead>
              <tbody>
                <tr className="h-[18px]">
                  <td className="border-r border-[#d4dfe8] p-0">
                    <div className="flex items-center pl-1"><Ico size={13} box={15}>{ROW_ICONS.elems}</Ico>Анализ</div>
                  </td>
                  <td className="p-0 pl-0.5">Анализ</td>
                  <td />
                </tr>
                {ELEMENTS.map((e, i) => (
                  <tr key={e.label} className="h-[18px]">
                    <td className="overflow-hidden border-r border-[#d4dfe8] p-0">
                      <div className="flex items-center pl-1 whitespace-nowrap">
                        <Branch h={18} sign={e.plus ? '+' : undefined} last={i === ELEMENTS.length - 1} />
                        <Ico size={12} box={15}>{ROW_ICONS[e.icon]}</Ico>
                        <span className={clsx('px-px', e.sel && 'bg-[#a5e3e3]')}>{e.label}</span>
                      </div>
                    </td>
                    <td className="p-0 pl-0.5 whitespace-nowrap"><span className={clsx(e.sel && 'bg-[#a5e3e3]')}>{e.value}</span></td>
                    <td />
                  </tr>
                ))}
              </tbody>
            </table>
            <div className="flex flex-1">
              <div className="w-[167px] border-r border-[#d4dfe8]" />
            </div>
            <div className="flex h-[22px] items-center border-t border-[#b9cad7] pb-1">
              <div className="flex w-[167px] items-center gap-1.5 px-1.5">
                <svg width="5" height="8" aria-hidden="true"><path d="M5 0v8l-5-4z" fill="#6f93a8" /></svg>
                <span className="h-3 w-[90px] rounded-md border border-[#8fb0c4] bg-linear-to-b from-white to-[#c5dcea] text-center text-[8px] leading-[8px] text-[#6f93a8]">····</span>
                <svg width="5" height="8" className="ml-auto" aria-hidden="true"><path d="M0 0v8l5-4z" fill="#6f93a8" /></svg>
              </div>
              <div className="flex flex-1 justify-between px-1.5">
                <svg width="5" height="8" aria-hidden="true"><path d="M5 0v8l-5-4z" fill="#b3c4cf" /></svg>
                <svg width="5" height="8" aria-hidden="true"><path d="M0 0v8l5-4z" fill="#b3c4cf" /></svg>
              </div>
            </div>
          </div>
          <Fold className="h-7">Определение</Fold>
        </div>
        <div className="mt-[18px] flex justify-between border-t border-[#b9cad7] pt-1.5 pr-[25px] pl-6">
          <Btn className="h-[23px] w-[84px]">Назад</Btn>
          <Btn className="h-[23px] w-[84px]">Следующий</Btn>
        </div>
        <div className="flex gap-1 pt-1.5 pb-1.5 pl-4">
          <Btn primary label="ok" className="h-7 w-[60px]">
            <Ico><path d="M2 10l3-3 3 4 8-8 2 2-10 11z" fill="#149a2a" stroke="#0b6b1a" /></Ico>
          </Btn>
          <Btn label="cancel" className="h-7 w-[60px]">
            <Ico><path d="M3 4h4l3 4 4-4h4l-6 6 5 6h-4l-3-4-4 4h-4l6-6z" fill="#c8141c" stroke="#7d0d10" /></Ico>
          </Btn>
          <Btn label="preview" className="ml-1.5 h-7 w-[60px]">
            <Ico size={22}>
              <circle cx="5" cy="12" r="3" stroke="#333" />
              <circle cx="12" cy="12" r="3" stroke="#333" />
              <path d="M2 11c1-4 4-5 6-4 M8 11.500h1 M15 11c2-2 4-5 2-5 M12 9c1-2 3-3 4-3" stroke="#333" />
            </Ico>
          </Btn>
        </div>
      </div>
    </Win>
  )
}

// ---------- user-defined analysis window ----------

function CustomAnalysisWindow() {
  const [useDefault, setUseDefault] = useState(true)
  const group = 'rounded-t-md border-t border-[#7f9fc0] bg-linear-to-b from-[#7f9fc0] to-transparent'
  const legend = "float-left -mt-2 ml-1 bg-[#dce9f1] px-1 font-['DejaVu_Serif_Condensed','Liberation_Serif',serif] text-[11px] font-bold text-[#4a7eb0]"

  return (
    <Win title="Собственный анализ" className="top-[490px] left-[246px] w-[433px] font-['Liberation_Sans',sans-serif]">
      <div className="mx-px flex flex-col bg-[#dce9f1] pt-1.5 text-xs text-[#333]">
        <Bar>Тип</Bar>
        <Combo id="type" value="LOCAL_GROUP" className="mx-2 mt-[5px] mb-[7px]" />
        <Bar>Определение</Bar>

        <fieldset className="mx-2 mt-1 h-[78px] min-w-0">
          <div className={clsx(group, 'mt-1.5 h-full px-px')}>
            <div className="h-full rounded-t-md bg-[#dce9f1] px-1.5">
              <legend className={legend}>Привязки</legend>
              <div className="clear-both flex items-center gap-1.5 pt-1">
                <span className="relative flex">
                  <input id="byDefault" type="checkbox" checked={useDefault} onChange={(e) => setUseDefault(e.target.checked)} className="size-[13px] appearance-none border border-[#5f8fae] bg-white" />
                  {useDefault && (
                    <svg width="13" height="13" viewBox="0 0 13 13" className="pointer-events-none absolute" aria-hidden="true">
                      <path d="M3 6l3 3 4-6" stroke="#2f7196" strokeWidth="2" fill="none" />
                    </svg>
                  )}
                </span>
                <label htmlFor="byDefault">По умолчанию</label>
              </div>
              <Btn disabled className="mt-[5px] h-[23px] w-[132px]">Выбрать...</Btn>
            </div>
          </div>
        </fieldset>

        <fieldset className="mx-2 h-[79px] min-w-0">
          <div className={clsx(group, 'mt-1.5 h-[70px] px-px')}>
            <div className="h-full rounded-t-md bg-[#dce9f1] px-1.5">
              <legend className={legend}>Настройки Вычисления</legend>
              <div className="clear-both grid grid-cols-[61px_1fr] items-center gap-y-[3px] pt-[3px]">
                <label htmlFor="param">Параметр</label>
                <Combo id="param" value="DISTANCE" />
                <label htmlFor="range">Область</label>
                <Combo id="range" value="Все поле" />
              </div>
            </div>
          </div>
        </fieldset>

        <Fold className="h-4">Установки Расчета</Fold>
        <div className="mx-0.5 mt-[11px]">
          <Bar>Результаты</Bar>
          <div className="mt-1 h-[68px] rounded-[3px] border border-[#8faabd] bg-[#f0f4f5] px-[3px] pt-1 leading-[15px]">
            <p>Минимальное значение = &nbsp;&nbsp;&nbsp; 0.100000</p>
            <p>Максимальное значение = &nbsp;&nbsp; 50.000000</p>
          </div>
        </div>
        <div className="mx-[5px] mt-[5px] grid grid-cols-3 gap-2.5">
          <Btn primary className="h-[23px]">Вычислить</Btn>
          <Btn className="h-[23px]">Настройки...</Btn>
          <Btn className="h-[23px]">Очистить</Btn>
        </div>
        <Fold className="mt-[9px] h-4">Сохраненные анализы</Fold>
        <div className="mt-1.5 flex justify-center gap-1.5 border-t border-[#b9cad7] py-2 pl-px">
          <Btn className="h-[23px] w-[132px]">Закрыть</Btn>
          <Btn disabled className="h-[23px] w-[132px]">Добавить элемент</Btn>
        </div>
      </div>
    </Win>
  )
}

// ---------- graph window ----------

const CURVE = [
  [0, 0], [0.079, 6.67], [0.157, 13.33], [0.236, 20], [0.259, 20], [0.282, 20], [0.304, 20], [0.324, 30], [0.344, 40], [0.364, 50],
  [0.476, 50], [0.588, 50], [0.7, 50], [0.72, 40], [0.739, 30], [0.758, 20], [0.79, 20], [0.821, 20], [0.853, 20], [0.863, 25],
  [0.873, 30], [0.882, 35], [0.911, 35], [0.94, 35], [0.97, 35], [0.98, 31.67], [0.99, 28.33], [1, 25],
]
const px = (p: number) => 81 + p * 445
const py = (v: number) => 333 - v * 5.68
const STEPS = Array.from({ length: 11 }, (_, i) => i)
const HALVES = Array.from({ length: 10 }, (_, i) => i + 0.5)

function Graph() {
  return (
    <svg viewBox="0 0 600 399" className="block w-full bg-[#000c2c] font-['Liberation_Mono',monospace]" role="img" aria-label="Pro/E Graph">
      <g stroke="#4c5c86" strokeDasharray="1 3">
        {STEPS.map((i) => <path key={`v${i}`} d={`M${px(i / 10)} ${py(50)}V${py(0)}`} />)}
        {STEPS.map((i) => <path key={`h${i}`} d={`M${px(0)} ${py(i * 5)}H${px(1)}`} />)}
      </g>
      <g stroke="#fff" strokeWidth="2">
        {STEPS.map((i) => <path key={`y${i}`} d={`M63 ${py(i * 5)}H81`} />)}
        {STEPS.map((i) => <path key={`x${i}`} d={`M${px(i / 10)} 333V350`} />)}
        <g strokeWidth="1">
          {HALVES.map((i) => <path key={`my${i}`} d={`M72 ${py(i * 5)}H81`} />)}
          {HALVES.map((i) => <path key={`mx${i}`} d={`M${px(i / 10)} 333V341`} />)}
        </g>
        <path d={`M81 ${py(50) - 1}V334H527`} strokeWidth="4" fill="none" />
      </g>
      <g fill="#e6ee62" fontSize="12">
        {STEPS.map((i) => <text key={`ly${i}`} x="60" y={py(i * 5)} textAnchor="end">{(i * 5).toFixed(2)}</text>)}
        {STEPS.map((i) => <text key={`lx${i}`} x={px(i / 10) - 2} y="362">{(i / 10).toFixed(2)}</text>)}
        <text x="247" y="19" fontSize="16">Pro/E Graph</text>
        <text x="306" y="375">Parameter</text>
        <text x="192" y="387">curve : 0</text>
        <text transform="translate(21 209) rotate(-90)">Value</text>
      </g>
      <g stroke="#2fd04c" fill="none">
        <polyline points={CURVE.map(([p, v]) => `${px(p)},${py(v)}`).join(' ')} />
        {CURVE.map(([p, v], i) => <circle key={i} cx={px(p)} cy={py(v)} r="3.500" />)}
        <path d="M15 387H162" />
        <circle cx="89" cy="387" r="3.500" />
      </g>
      <circle cx="81" cy="333" r="3" fill="#c9f7d0" />
    </svg>
  )
}

function GraphWindow() {
  return (
    <Win title="Работа с графиком" buttons={['min', 'max', 'close']} className="top-[441px] left-[836px] w-[616px]">
      <div className="mx-px flex flex-col bg-[#dce9f1]">
        <Menu items={['Файл', 'Вид', 'Формат']} className="h-7 gap-[13px] pt-1.5 pl-[19px]" />
        <div className="mt-[3px] flex h-9 items-center border-t border-r-2 border-b border-[#f3f8fb] border-r-[#8c9398] border-b-[#7b8286] pl-1">
          {['printer', 'gridEye', 'refresh', 'zoomIn', 'refit', 'report'].map((k) => (
            <button type="button" key={k} aria-label={k} className="flex w-[27px] justify-center"><Ico size={18}>{ICONS[k]}</Ico></button>
          ))}
        </div>
        <div className="mx-1 mt-2 border border-[#f3f8fb]"><Graph /></div>
        <div className="mx-1 mt-1 mb-0.5 flex h-6 items-center border border-[#c3d0da] bg-[#d8e5ee] pl-2 font-['Liberation_Sans',sans-serif] text-xs text-[#333]">Статус выбора...</div>
      </div>
    </Win>
  )
}

// ---------- 3D viewport ----------

function Viewport() {
  return (
    <main className="relative min-w-0 flex-1 overflow-hidden bg-linear-to-b from-[#005b9c] to-[#000d2c]">
      <svg width="700" height="260" viewBox="740 340 700 260" className="absolute top-[174px] left-[499px]" fill="none" role="img" aria-label="model">
        <path d="M791 369L872 455Q884 465 903 466L1088 442Q1110 441 1120 452L1192 526" stroke="#4fd0f5" />
        <path d="M906 454L922 435L1067 417L1089 431L1120 428" stroke="#5fe3cf" />
        <path d="M870 458L906 454L920 433L1067 415L1089 430L1123 427L1225 426" stroke="#1ed23c" strokeWidth="1.500" />
        <path d="M870 458L906 454 M1178 427h18" stroke="#8fe9a0" strokeDasharray="10 4" />
        <path d="M807 461L818 455L853 451L856 454" stroke="#33d97c" strokeWidth="2" strokeDasharray="12 3" />
        <circle cx="806" cy="461" r="3" fill="#e0403a" />
        <text x="819" y="467" fontSize="16" fill="#c8385a" className="font-['Liberation_Mono',monospace]">FPNT0</text>
      </svg>
      <AnalysisWindow />
      <CustomAnalysisWindow />
      <GraphWindow />
      <div className="pointer-events-none absolute top-[380px] left-[341px] flex items-baseline leading-none whitespace-nowrap text-[#b4c6d6] opacity-90 [text-shadow:2px_2px_1px_#24405c]">
        <span className="font-['Noto_Sans_CJK_SC',sans-serif] text-[78px] font-light">莫西网</span>
        <span className="font-['Liberation_Mono',monospace] text-[67px]">www.3dmox.com</span>
      </div>
    </main>
  )
}

const MAIN_MENU = ['Файл', 'Править', 'Вид', 'Вставить', 'Анализ', 'Данные', 'Search', 'Приложения', 'Инструменты', 'Окно', 'EFX 7.0', 'Справка']

const MESSAGES = [
  'Окно дерева модели не будет показано.',
  'Окно дерева модели  будет показано.',
  'Расчет АнП завершен.',
  'Опорные точки будут отображены.',
]

export default function App() {
  return (
    <div className="relative flex h-screen flex-col overflow-hidden bg-[#dce9f1] font-['DejaVu_Sans_Condensed','Liberation_Sans',sans-serif]">
      <header>
        <div className="flex h-[18px] items-center gap-0.5 bg-linear-to-r from-[#808080] to-[#c0c0c0] pr-0.5 pl-[3px] text-[11px] font-bold text-[#d4d0c8]">
          <Cube />
          <h1 className="flex-1 pt-px">REQUEST (Активный) - Creo Elements/Pro 5.0</h1>
          <div className="flex">
            <CaptionButton kind="min" />
            <CaptionButton kind="restore" />
            <CaptionButton kind="close" />
          </div>
        </div>
        <Menu items={MAIN_MENU} className="h-7 gap-[13px] pt-2 pl-2" />
        <Toolbar />
        <div className="flex h-[86px] justify-between border-b-2 border-[#c8eefa] pt-1 text-[#2b3238]">
          <ul className="pl-1.5 font-['Liberation_Sans',sans-serif] text-[11px]">
            {MESSAGES.map((m) => (
              <li key={m} className="flex h-4 items-center gap-[5px] whitespace-pre">
                <span className="size-[5px] rounded-full bg-[#1414c0]" />
                {m}
              </li>
            ))}
          </ul>
          <div className="mr-[195px] flex h-[26px] items-center self-end font-['Liberation_Sans',sans-serif] text-xs">
            <span className="flex h-full w-8 items-center justify-center border-x border-[#c3d0da]">
              <Ico>
                <path d="M8 2.500q2-2 4 0v9q3 3 0 6-2 2-4 0-3-3 0-6z" stroke="#999" fill="#e8eef2" />
                <circle cx="10" cy="15" r="3" fill="#8d9499" stroke="none" />
              </Ico>
            </span>
            <span className="pr-0.5 pl-1">1 выбран</span>
          </div>
        </div>
      </header>
      <div className="flex min-h-0 flex-1">
        <LayerPanel />
        <Viewport />
        <div className="w-[197px] shrink-0" />
      </div>
      <ModelTree />
    </div>
  )
}
